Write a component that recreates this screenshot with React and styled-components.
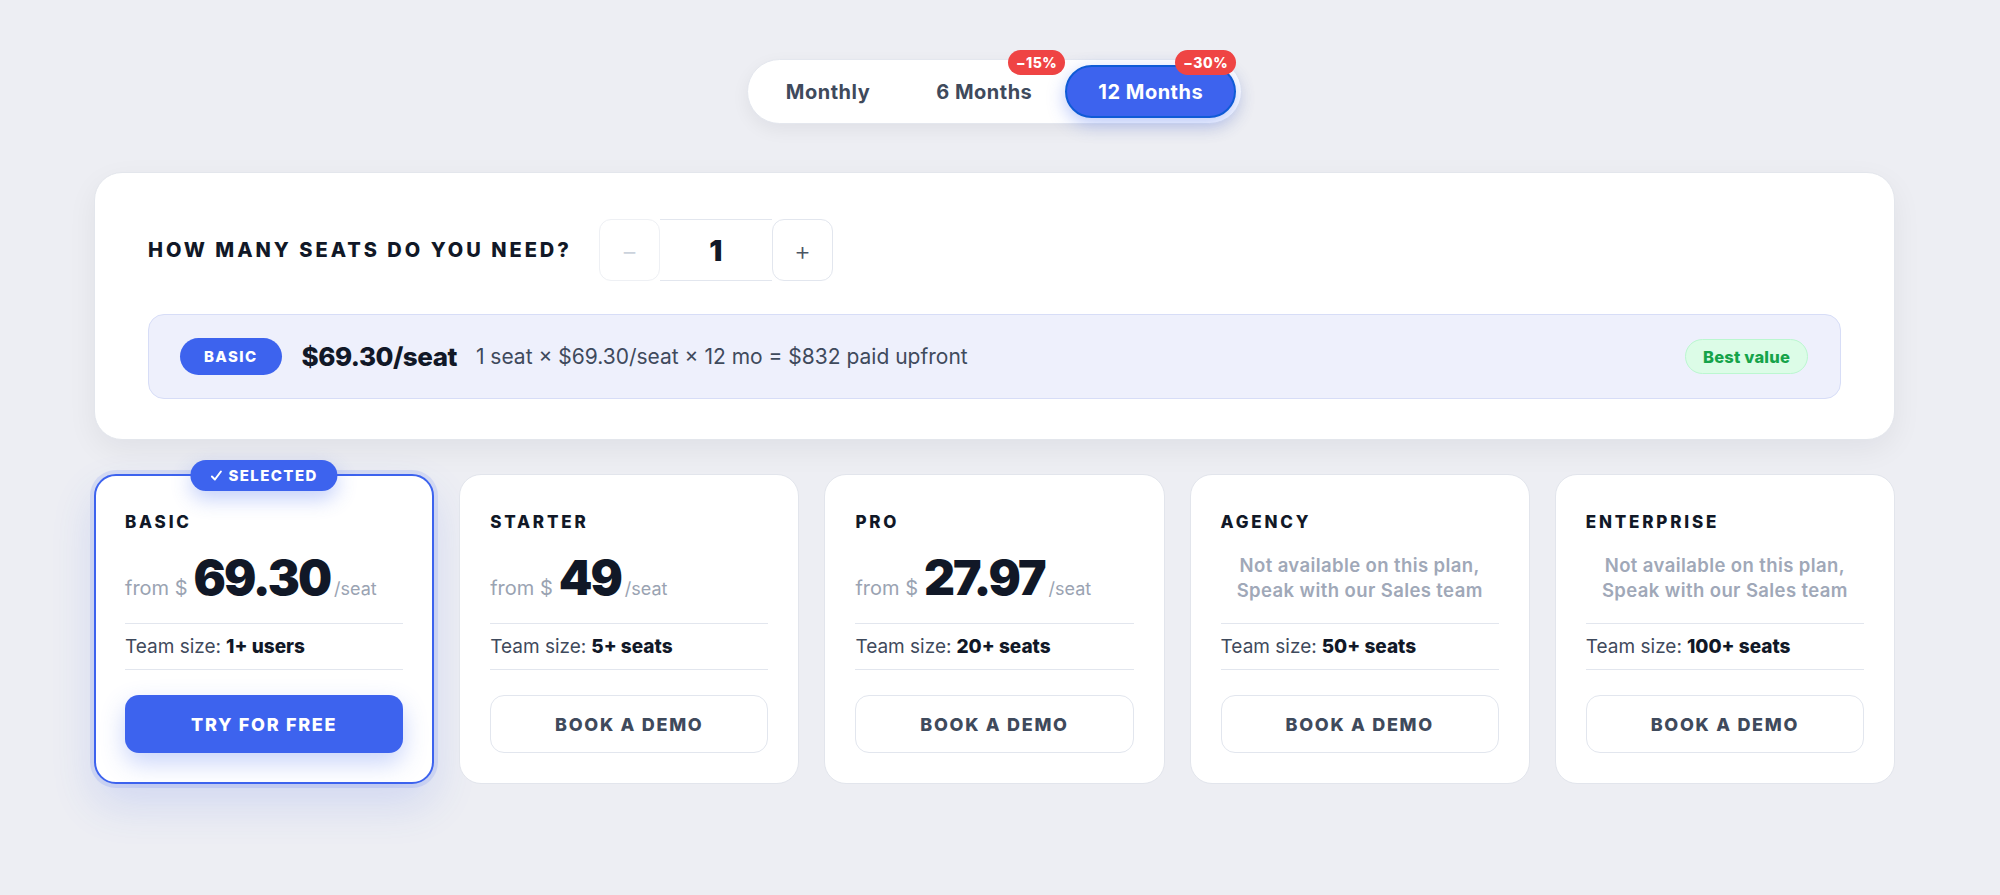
import React, { useState } from 'react';
import styled, { createGlobalStyle, css } from 'styled-components';

const BLUE = '#3d63ee';

const GlobalStyle = createGlobalStyle`
  * { box-sizing: border-box; }
  body {
    margin: 0;
    background: #edeef3;
    font-family: Inter, "Open Sans", sans-serif;
    color: #111827;
  }
`;

// página inteira, conteúdo centralizado
const Page = styled.div`
  padding: 59px 105px 60px 94px;
  display: flex;
  flex-direction: column;
  align-items: center;
`;

// seletor de período
const Toggle = styled.div`
  display: flex;
  padding: 5px;
  background: #fff;
  border: 1px solid #e4e7ee;
  border-radius: 999px;
  box-shadow: 0 6px 18px rgba(17, 24, 39, 0.06);
`;

const ToggleButton = styled.button`
  position: relative;
  height: 53px;
  padding: 0 31px;
  border: 2px solid transparent;
  border-radius: 999px;
  background: transparent;
  font-family: inherit;
  font-size: 20px;
  font-weight: 700;
  letter-spacing: 0.5px;
  color: #3f4a5c;
  cursor: pointer;

  ${(p) =>
    p.$active &&
    css`
      background: ${BLUE};
      border-color: #0f5bd6;
      color: #fff;
      box-shadow: 0 6px 18px rgba(61, 99, 238, 0.35);
    `}
`;

const Discount = styled.span`
  position: absolute;
  top: -17px;
  right: -2px;
  height: 25px;
  padding: 0 8px;
  display: flex;
  align-items: center;
  background: #ef4444;
  color: #fff;
  font-size: 14px;
  font-weight: 800;
  border-radius: 999px;
`;

// cartão de quantidade de assentos
const SeatsCard = styled.section`
  width: 100%;
  margin-top: 48px;
  padding: 46px 53px 40px;
  background: #fff;
  border: 1px solid #e3e6ec;
  border-radius: 28px;
  box-shadow: 0 10px 30px rgba(17, 24, 39, 0.06);
`;

const SeatsRow = styled.div`
  display: flex;
  align-items: center;
  gap: 27px;
`;

const SeatsLabel = styled.h3`
  margin: 0;
  font-size: 20px;
  font-weight: 800;
  letter-spacing: 3px;
  color: #111827;
`;

const Stepper = styled.div`
  display: flex;
  height: 62px;
`;

const StepButton = styled.button`
  width: 61px;
  height: 62px;
  border: 1px solid ${(p) => (p.disabled ? '#eef0f4' : '#e2e6ee')};
  border-radius: 12px;
  background: #fff;
  font-family: inherit;
  font-size: 26px;
  font-weight: 300;
  color: ${(p) => (p.disabled ? '#cbd2dc' : '#4b5563')};
  cursor: pointer;
`;

const SeatsValue = styled.div`
  width: 112px;
  display: flex;
  align-items: center;
  justify-content: center;
  border-top: 1px solid #e2e6ee;
  border-bottom: 1px solid #e2e6ee;
  font-size: 29px;
  font-weight: 900;
  color: #111827;
`;

const Summary = styled.div`
  margin-top: 33px;
  height: 85px;
  padding: 0 32px 0 31px;
  display: flex;
  align-items: center;
  background: #eef0fc;
  border: 1px solid #d7ddf7;
  border-radius: 16px;
`;

const PlanPill = styled.span`
  height: 37px;
  padding: 0 24px;
  display: flex;
  align-items: center;
  background: ${BLUE};
  color: #fff;
  font-size: 15px;
  font-weight: 800;
  letter-spacing: 1.4px;
  border-radius: 999px;
`;

const SummaryPrice = styled.span`
  margin-left: 20px;
  font-size: 26px;
  font-weight: 800;
  letter-spacing: -0.5px;
  color: #111827;
`;

const SummaryDetail = styled.span`
  margin-left: 19px;
  font-size: 21px;
  color: #3f4a5c;
`;

const BestValue = styled.span`
  margin-left: auto;
  height: 35px;
  padding: 0 17px;
  display: flex;
  align-items: center;
  background: #dcfce7;
  border: 1px solid #bbf7d0;
  color: #16a34a;
  font-size: 16.5px;
  font-weight: 800;
  letter-spacing: 0.2px;
  border-radius: 999px;
`;

// grade de planos
const Plans = styled.div`
  width: 100%;
  margin-top: 34px;
  display: grid;
  grid-template-columns: repeat(5, 1fr);
  gap: 25px;
`;

const Card = styled.article`
  position: relative;
  height: 310px;
  padding: 36px 30px 30px;
  display: flex;
  flex-direction: column;
  background: #fff;
  border: 1px solid #e2e5ec;
  border-radius: 22px;

  ${(p) =>
    p.$selected &&
    css`
      padding: 35px 29px 29px;
      border: 2px solid ${BLUE};
      box-shadow: 0 0 0 4px rgba(61, 99, 238, 0.13),
        0 20px 44px rgba(61, 99, 238, 0.16);
    `}
`;

const SelectedBadge = styled.span`
  position: absolute;
  top: -16px;
  left: 50%;
  transform: translateX(-50%);
  height: 31px;
  padding: 0 20px;
  display: flex;
  align-items: center;
  gap: 6px;
  white-space: nowrap;
  background: ${BLUE};
  color: #fff;
  font-size: 15px;
  font-weight: 800;
  letter-spacing: 1.4px;
  border-radius: 999px;
  box-shadow: 0 8px 20px rgba(61, 99, 238, 0.3);

  svg {
    flex: none;
  }
`;

const PlanName = styled.h4`
  margin: 0;
  font-size: 17px;
  line-height: 22px;
  font-weight: 800;
  letter-spacing: 2.8px;
  color: #111827;
`;

const PriceArea = styled.div`
  height: 90px;
  display: flex;
  align-items: center;
`;

const PriceLine = styled.div`
  display: flex;
  align-items: baseline;
  white-space: nowrap;
`;

const From = styled.span`
  font-size: 20px;
  color: #9aa3b2;
  margin-right: 6px;
`;

const Amount = styled.span`
  font-size: 48px;
  line-height: 1;
  font-weight: 900;
  letter-spacing: -2px;
  color: #111827;
`;

const PerSeat = styled.span`
  margin-left: 4px;
  font-size: 18px;
  color: #9aa3b2;
`;

const Unavailable = styled.p`
  width: 100%;
  margin: 0;
  text-align: center;
  font-size: 18.5px;
  line-height: 25px;
  font-weight: 600;
  letter-spacing: 0.4px;
  color: #a0a8b8;
`;

const TeamRow = styled.div`
  height: 47px;
  display: flex;
  align-items: center;
  border-top: 1px solid #e2e6ee;
  border-bottom: 1px solid #e2e6ee;
  font-size: 19px;
  color: #3f4a5c;

  b {
    margin-left: 5px;
    font-weight: 800;
    color: #111827;
  }
`;

const CardButton = styled.button`
  margin-top: 25px;
  height: 58px;
  width: 100%;
  border-radius: 14px;
  font-family: inherit;
  font-size: 18px;
  font-weight: 800;
  letter-spacing: 1.7px;
  cursor: pointer;

  ${(p) =>
    p.$primary
      ? css`
          background: ${BLUE};
          border: none;
          color: #fff;
          box-shadow: 0 10px 24px rgba(61, 99, 238, 0.28);
        `
      : css`
          background: #fff;
          border: 1.5px solid #e2e6ee;
          color: #3f4a5c;
        `}
`;

const periods = [
  { id: 'monthly', label: 'Monthly' },
  { id: '6m', label: '6 Months', off: '−15%' },
  { id: '12m', label: '12 Months', off: '−30%' },
];

const plans = [
  { name: 'BASIC', price: '69.30', team: '1+ users', selected: true },
  { name: 'STARTER', price: '49', team: '5+ seats' },
  { name: 'PRO', price: '27.97', team: '20+ seats' },
  { name: 'AGENCY', team: '50+ seats' },
  { name: 'ENTERPRISE', team: '100+ seats' },
];

export default function App() {
  const [period, setPeriod] = useState('12m');
  const [seats, setSeats] = useState(1);

  return (
    <>
      <GlobalStyle />
      <Page>
        <Toggle>
          {periods.map((p) => (
            <ToggleButton
              key={p.id}
              $active={period === p.id}
              onClick={() => setPeriod(p.id)}
            >
              {p.label}
              {p.off && <Discount>{p.off}</Discount>}
            </ToggleButton>
          ))}
        </Toggle>

        <SeatsCard>
          <SeatsRow>
            <SeatsLabel>HOW MANY SEATS DO YOU NEED?</SeatsLabel>
            <Stepper>
              <StepButton
                disabled={seats <= 1}
                onClick={() => setSeats(seats - 1)}
              >
                −
              </StepButton>
              <SeatsValue>{seats}</SeatsValue>
              <StepButton onClick={() => setSeats(seats + 1)}>+</StepButton>
            </Stepper>
          </SeatsRow>

          <Summary>
            <PlanPill>BASIC</PlanPill>
            <SummaryPrice>$69.30/seat</SummaryPrice>
            <SummaryDetail>
              {seats} seat × $69.30/seat × 12 mo = ${Math.round(seats * 69.3 * 12)} paid upfront
            </SummaryDetail>
            <BestValue>Best value</BestValue>
          </Summary>
        </SeatsCard>

        <Plans>
          {plans.map((plan) => (
            <Card key={plan.name} $selected={plan.selected}>
              {plan.selected && (
                <SelectedBadge>
                  <svg width="12" height="12" viewBox="0 0 12 12" fill="none">
                    <path
                      d="M1.5 6.5 L4.5 9.5 L10.5 1.5"
                      stroke="#fff"
                      strokeWidth="2"
                      strokeLinecap="round"
                      strokeLinejoin="round"
                    />
                  </svg>
                  SELECTED
                </SelectedBadge>
              )}
              <PlanName>{plan.name}</PlanName>
              <PriceArea>
                {plan.price ? (
                  <PriceLine>
                    <From>from $</From>
                    <Amount>{plan.price}</Amount>
                    <PerSeat>/seat</PerSeat>
                  </PriceLine>
                ) : (
                  <Unavailable>
                    Not available on this plan,
                    <br />
                    Speak with our Sales team
                  </Unavailable>
                )}
              </PriceArea>
              <TeamRow>
                Team size: <b>{plan.team}</b>
              </TeamRow>
              <CardButton $primary={plan.selected}>
                {plan.selected ? 'TRY FOR FREE' : 'BOOK A DEMO'}
              </CardButton>
            </Card>
          ))}
        </Plans>
      </Page>
    </>
  );
}
